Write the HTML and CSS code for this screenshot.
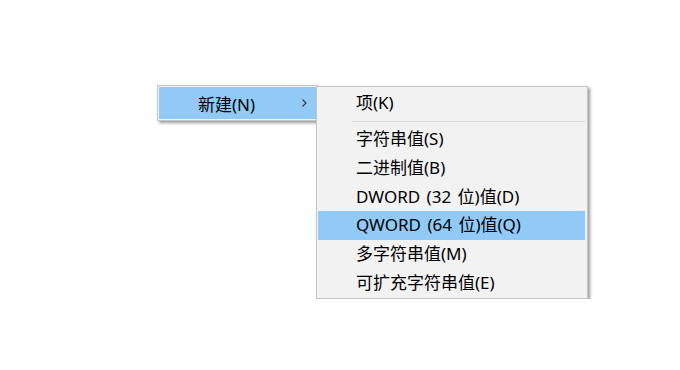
FILE: index.html
```html
<!DOCTYPE html>
<html lang="zh-CN">
<head>
<meta charset="utf-8">
<link rel="stylesheet" href="styles.css">
</head>
<body>
<div class="desk">
  <div class="menu parent">
    <div class="item active">
      <span class="label">新建(N)</span>
      <svg class="chev" width="5" height="8" viewBox="0 0 5 8"><path d="M0.5 0.5 L4 4 L0.5 7.5" fill="none" stroke="#333" stroke-width="1.1"/></svg>
    </div>
  </div>
  <div class="menu sub">
    <div class="item">项(K)</div>
    <div class="sep"></div>
    <div class="item">字符串值(S)</div>
    <div class="item">二进制值(B)</div>
    <div class="item">DWORD (32 位)值(D)</div>
    <div class="item active">QWORD (64 位)值(Q)</div>
    <div class="item">多字符串值(M)</div>
    <div class="item">可扩充字符串值(E)</div>
  </div>
</div>
</body>
</html>
```
FILE: styles.css
```css
html, body {
  margin: 0;
  padding: 0;
  background: #ffffff;
}
body {
  font-family: "Noto Sans", "Noto Sans CJK SC", sans-serif;
  font-size: 17px;
  color: #000;
}
.desk {
  display: flex;
  align-items: flex-start;
  padding: 85px 0 0 157px;
}
.menu {
  background: #f2f2f2;
  border: 1px solid #c6c6c6;
  box-shadow: 2px 2px 3px rgba(0, 0, 0, 0.4);
  box-sizing: border-box;
}
.parent {
  width: 161px;
  padding: 1px;
}
.parent .item {
  height: 32px;
  display: flex;
  align-items: center;
  padding-left: 39px;
  padding-right: 9px;
}
.parent .label {
  flex: 1;
}
.chev {
  display: block;
}
.sub {
  position: relative;
  width: 272px;
  margin-left: -2px;
  margin-top: 1px;
  padding: 2px 2px 0 1px;
}
.sub .item {
  height: 28.8px;
  line-height: 28.8px;
  padding-left: 38px;
  white-space: nowrap;
  word-spacing: 2px;
}
.item.active {
  background: #91c9f7;
}
.sep {
  height: 7.2px;
  box-sizing: border-box;
  padding-top: 3.2px;
  margin-left: 34px;
}
.sep::before {
  content: "";
  display: block;
  height: 1px;
  background: #d7d7d7;
}
```
